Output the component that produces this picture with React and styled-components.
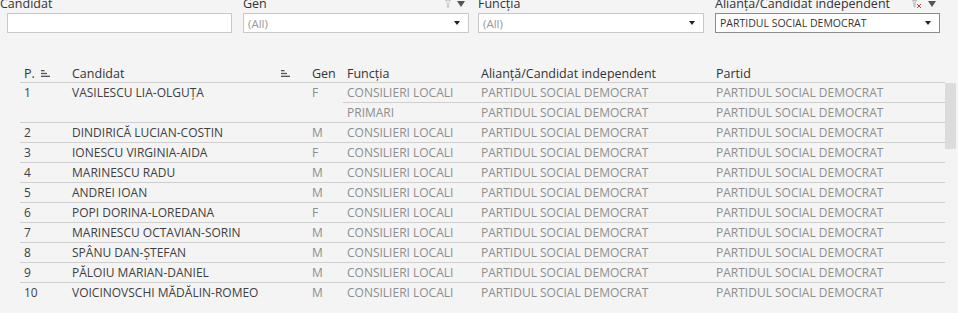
import styled, { createGlobalStyle } from 'styled-components';

const GlobalStyle = createGlobalStyle`
  html, body {
    margin: 0;
    padding: 0;
    background: #f4f4f4;
    font-family: "Open Sans", "Noto Sans", sans-serif;
    overflow: hidden;
  }
`;

const Page = styled.div`
  width: 958px;
  height: 313px;
  overflow: hidden;
  position: relative;
`;

const FilterBar = styled.div`
  display: flex;
  margin-top: -3px;
`;

const Filter = styled.div`
  display: flex;
  flex-direction: column;
  width: ${(p) => p.width}px;
  margin-left: ${(p) => p.left || 0}px;
`;

const FilterHead = styled.div`
  display: flex;
  align-items: center;
  height: 14px;
  margin-left: ${(p) => p.shift || 0}px;
  font-size: 12.5px;
  line-height: 14px;
  color: #333;
`;

const HeadIcons = styled.span`
  margin-left: auto;
  display: flex;
  align-items: center;
  gap: 6px;
  margin-right: 4px;
`;

const Box = styled.div`
  margin-top: 2px;
  height: 18px;
  background: #fff;
  border: 1px solid ${(p) => (p.active ? '#8c8c8c' : '#c8c8c8')};
  display: flex;
  align-items: center;
  padding: 0 8px 0 4px;
  font-size: ${(p) => (p.active ? '10.5px' : '11.5px')};
  color: ${(p) => (p.active ? '#333' : '#999')};
`;

const Caret = styled.span`
  margin-left: auto;
  width: 0;
  height: 0;
  border-left: 3px solid transparent;
  border-right: 3px solid transparent;
  border-top: 4px solid #222;
`;

const TableWrap = styled.div`
  position: relative;
  margin: 32px 13px 0 20px;
`;

const cols = '48px 240px 35px 134px 235px 233px';

const HeaderRow = styled.div`
  display: grid;
  grid-template-columns: ${cols};
  height: 17px;
  border-bottom: 1px solid #cfcfcf;
  font-size: 12.5px;
  color: #333;
`;

const HeadCell = styled.div`
  display: flex;
  align-items: center;
  gap: 6px;
  padding-left: 4px;
  padding-right: ${(p) => (p.spread ? '18px' : '0')};
  justify-content: ${(p) => (p.spread ? 'space-between' : 'flex-start')};
  white-space: nowrap;
`;

const Group = styled.div`
  display: grid;
  grid-template-columns: ${cols};
  border-bottom: ${(p) => (p.last ? 'none' : '1px solid #cfcfcf')};
`;

const Cell = styled.div`
  grid-row: ${(p) => (p.span ? `span ${p.span}` : 'auto')};
  padding-left: 4px;
  line-height: 19px;
  font-size: 12px;
  white-space: nowrap;
  color: ${(p) => (p.dim ? '#8e8e8e' : '#3f3f3f')};
`;

const SubRow = styled.div`
  display: contents;
`;

const SubCell = styled(Cell)`
  height: 19px;
  border-top: ${(p) => (p.split ? '1px solid #cfcfcf' : 'none')};
`;

const Thumb = styled.div`
  position: absolute;
  right: -11px;
  top: 18px;
  width: 11px;
  height: 66px;
  background: #dcdcdc;
`;

const SortIcon = () => (
  <svg width="9" height="7" viewBox="0 0 9 7">
    <rect x="0" y="0" width="3.5" height="1.3" fill="#555" />
    <rect x="0" y="2.85" width="6" height="1.3" fill="#555" />
    <rect x="0" y="5.7" width="9" height="1.3" fill="#555" />
  </svg>
);

const Funnel = ({ color = '#c4c4c4' }) => (
  <svg width="6" height="8" viewBox="0 0 6 8">
    <path d="M0.5 0.5 H5.5 L3.6 3.6 V7.5 H2.4 V3.6 Z" fill="none" stroke={color} strokeWidth="0.9" />
  </svg>
);

const DropTri = () => (
  <svg width="8" height="6" viewBox="0 0 8 6">
    <path d="M0 0 H8 L4 6 Z" fill="#555" />
  </svg>
);

const ClearFilter = () => (
  <svg width="10" height="9" viewBox="0 0 10 9">
    <path d="M0.5 0.5 H4.5 L3 3 V7 H2 V3 Z" fill="none" stroke="#aaa" strokeWidth="0.8" />
    <path d="M5 4 L9 8 M9 4 L5 8" stroke="#d23b3b" strokeWidth="1" />
  </svg>
);

const rows = [
  { n: 1, name: 'VASILESCU LIA-OLGUȚA', gen: 'F', fn: ['CONSILIERI LOCALI', 'PRIMARI'] },
  { n: 2, name: 'DINDIRICĂ LUCIAN-COSTIN', gen: 'M', fn: ['CONSILIERI LOCALI'] },
  { n: 3, name: 'IONESCU VIRGINIA-AIDA', gen: 'F', fn: ['CONSILIERI LOCALI'] },
  { n: 4, name: 'MARINESCU RADU', gen: 'M', fn: ['CONSILIERI LOCALI'] },
  { n: 5, name: 'ANDREI IOAN', gen: 'M', fn: ['CONSILIERI LOCALI'] },
  { n: 6, name: 'POPI DORINA-LOREDANA', gen: 'F', fn: ['CONSILIERI LOCALI'] },
  { n: 7, name: 'MARINESCU OCTAVIAN-SORIN', gen: 'M', fn: ['CONSILIERI LOCALI'] },
  { n: 8, name: 'SPÂNU DAN-ȘTEFAN', gen: 'M', fn: ['CONSILIERI LOCALI'] },
  { n: 9, name: 'PĂLOIU MARIAN-DANIEL', gen: 'M', fn: ['CONSILIERI LOCALI'] },
  { n: 10, name: 'VOICINOVSCHI MĂDĂLIN-ROMEO', gen: 'M', fn: ['CONSILIERI LOCALI'] },
];

const PSD = 'PARTIDUL SOCIAL DEMOCRAT';

export default function App() {
  return (
    <Page>
      <GlobalStyle />
      <FilterBar>
        <Filter width={225} left={7}>
          <FilterHead shift={-7}>Candidat</FilterHead>
          <Box />
        </Filter>
        <Filter width={226} left={11}>
          <FilterHead>
            Gen
            <HeadIcons>
              <Funnel />
              <DropTri />
            </HeadIcons>
          </FilterHead>
          <Box>
            (All)
            <Caret />
          </Box>
        </Filter>
        <Filter width={226} left={9}>
          <FilterHead>Funcția</FilterHead>
          <Box>
            (All)
            <Caret />
          </Box>
        </Filter>
        <Filter width={225} left={11}>
          <FilterHead>
            Alianță/Candidat independent
            <HeadIcons>
              <ClearFilter />
              <DropTri />
            </HeadIcons>
          </FilterHead>
          <Box active>
            {PSD}
            <Caret />
          </Box>
        </Filter>
      </FilterBar>

      <TableWrap>
        <HeaderRow>
          <HeadCell>
            P. <SortIcon />
          </HeadCell>
          <HeadCell spread>
            Candidat <SortIcon />
          </HeadCell>
          <HeadCell>Gen</HeadCell>
          <HeadCell>Funcția</HeadCell>
          <HeadCell>Alianță/Candidat independent</HeadCell>
          <HeadCell>Partid</HeadCell>
        </HeaderRow>
        {rows.map((r, i) => (
          <Group key={r.n} last={i === rows.length - 1}>
            <Cell span={r.fn.length}>{r.n}</Cell>
            <Cell span={r.fn.length}>{r.name}</Cell>
            <Cell span={r.fn.length} dim>
              {r.gen}
            </Cell>
            {r.fn.map((f, j) => (
              <SubRow key={f}>
                <SubCell dim split={j > 0}>{f}</SubCell>
                <SubCell dim split={j > 0}>{PSD}</SubCell>
                <SubCell dim split={j > 0}>{PSD}</SubCell>
              </SubRow>
            ))}
          </Group>
        ))}
        <Thumb />
      </TableWrap>
    </Page>
  );
}
